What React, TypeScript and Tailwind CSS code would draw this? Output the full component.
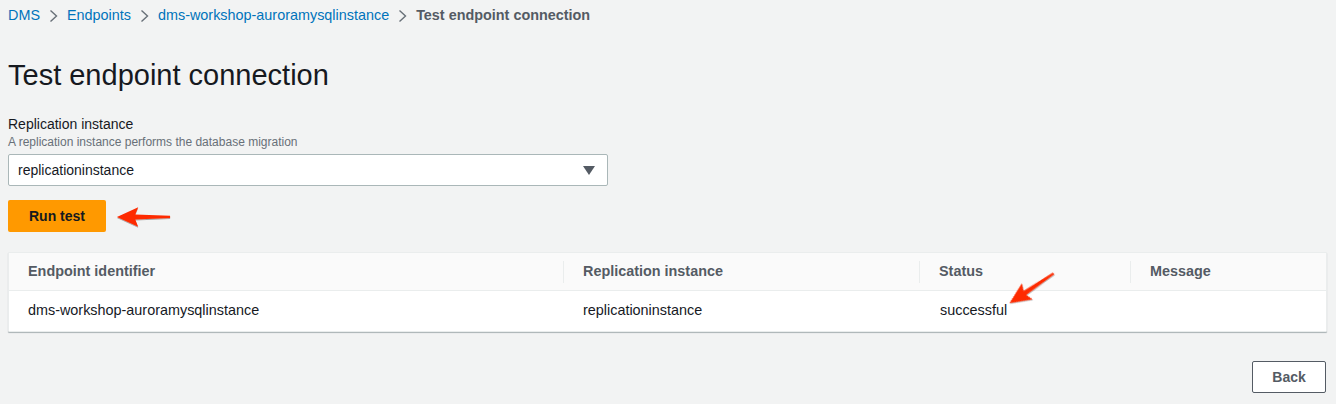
import React from "react";

const crumbs = ["DMS", "Endpoints", "dms-workshop-auroramysqlinstance"];

const columns = [
  { key: "endpoint", label: "Endpoint identifier", width: "w-[554px]" },
  { key: "instance", label: "Replication instance", width: "w-[356px]" },
  { key: "status", label: "Status", width: "w-[211px]" },
  { key: "message", label: "Message", width: "flex-1" },
];

const row = ["dms-workshop-auroramysqlinstance", "replicationinstance", "successful", ""];

const Chevron = () => (
  <svg className="w-[9px] h-[14px] mx-[9px]" viewBox="0 0 9 14" fill="none">
    <path d="M1.5 1.5l6 5.5-6 5.5" stroke="#687078" strokeWidth={1.4} />
  </svg>
);

// red callout arrow, drawn pointing left; rotate for other directions
const RedArrow = ({ className }: { className?: string }) => (
  <svg className={className} viewBox="0 0 60 26" fill="none">
    <defs>
      <filter id="arrowShadow" x="-20%" y="-30%" width="140%" height="160%">
        <feDropShadow dx="0" dy="1" stdDeviation="0.8" floodColor="#000" floodOpacity="0.35" />
      </filter>
    </defs>
    <path
      d="M2 13 L24 3 L21 10.5 L57 11.8 L57 14 L21 15.5 L24 23 Z"
      fill="#fe2c00"
      filter="url(#arrowShadow)"
    />
  </svg>
);

export default function App() {
  return (
    <div
      className="min-h-[404px] bg-[#f2f3f3] pl-[8px] pr-[9px] text-[14px] text-[#16191f]"
      style={{ fontFamily: '"Liberation Sans", Arial, sans-serif' }}
    >
      {/* breadcrumbs */}
      <nav className="flex items-center h-[30px] pt-[1px] text-[14.4px]">
        {crumbs.map((c) => (
          <React.Fragment key={c}>
            <span className="text-[#0073bb]">{c}</span>
            <Chevron />
          </React.Fragment>
        ))}
        <span className="font-bold text-[#545b64]">Test endpoint connection</span>
      </nav>

      <h1 className="mt-[28px] text-[29px] leading-[34px] text-[#16191f]">Test endpoint connection</h1>

      <div className="mt-[22px]">
        <div className="leading-[20px]">Replication instance</div>
        <div className="text-[12px] leading-[16px] text-[#687078]">
          A replication instance performs the database migration
        </div>
        <div className="mt-[4px] w-[600px] h-[32px] bg-white border border-[#aab7b8] rounded-[2px] flex items-center justify-between pl-[9px] pr-[12px]">
          <span>replicationinstance</span>
          <svg className="w-[12px] h-[9px]" viewBox="0 0 12 9">
            <path d="M0 0h12L6 9z" fill="#545b64" />
          </svg>
        </div>
      </div>

      <div className="mt-[14px] flex items-center">
        <button className="w-[98px] h-[32px] bg-[#ff9900] rounded-[2px] font-bold text-[#16191f]">
          Run test
        </button>
        <RedArrow className="ml-[9px] mt-[1px] w-[58px] h-[26px]" />
      </div>

      {/* results table */}
      <div className="relative mt-[20px] bg-white border border-[#eaeded] shadow-[0_1px_1px_rgba(0,28,36,0.3)] rounded-[1px] text-[14.4px]">
        <div className="flex h-[38px] bg-[#fafafa] border-b border-[#eaeded] font-bold text-[#545b64]">
          {columns.map((col, i) => (
            <div key={col.key} className={`${col.width} flex items-center`}>
              {i > 0 && <div className="w-px h-[22px] bg-[#eaeded]" />}
              <span className="pl-[19px]">{col.label}</span>
            </div>
          ))}
        </div>
        <div className="flex h-[40px]">
          {columns.map((col, i) => (
            <div key={col.key} className={`${col.width} flex items-center pl-[19px] ${i > 0 ? "ml-px" : ""}`}>
              {row[i]}
            </div>
          ))}
        </div>
        <RedArrow className="absolute left-[994px] top-[22px] w-[58px] h-[26px] rotate-[-34deg]" />
      </div>

      <div className="flex justify-end mt-[29px] pr-[1px]">
        <button className="w-[74px] h-[32px] bg-white border border-[#545b64] rounded-[2px] font-bold text-[#545b64]">
          Back
        </button>
      </div>
    </div>
  );
}
